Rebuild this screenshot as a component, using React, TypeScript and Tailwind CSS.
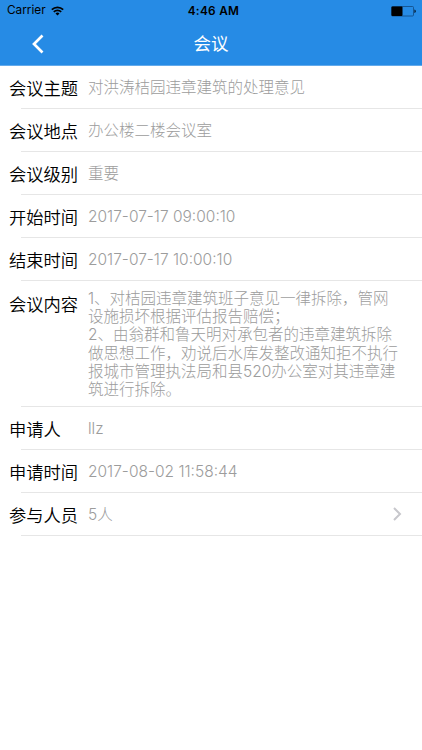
interface RowProps {
  label: string;
  value: string;
  arrow?: boolean;
}

const rows: RowProps[] = [
  { label: "会议主题", value: "对洪涛桔园违章建筑的处理意见" },
  { label: "会议地点", value: "办公楼二楼会议室" },
  { label: "会议级别", value: "重要" },
  { label: "开始时间", value: "2017-07-17 09:00:10" },
  { label: "结束时间", value: "2017-07-17 10:00:10" },
];

const moreRows: RowProps[] = [
  { label: "申请人", value: "llz" },
  { label: "申请时间", value: "2017-08-02 11:58:44" },
  { label: "参与人员", value: "5人", arrow: true },
];

const content = [
  "1、对桔园违章建筑班子意见一律拆除，管网",
  "设施损坏根据评估报告赔偿；",
  "2、由翁群和鲁天明对承包者的违章建筑拆除",
  "做思想工作，劝说后水库发整改通知拒不执行",
  "报城市管理执法局和县520办公室对其违章建",
  "筑进行拆除。",
];

const Row = ({ label, value, arrow }: RowProps) => (
  <div className="h-[43px] flex flex-col">
    <div className="flex-1 flex items-center pl-[9px] pr-5">
      <span className="w-[79px] shrink-0 pt-[3px] text-[17.3px] leading-6 font-[350] text-black">{label}</span>
      <span className="flex-1 pt-px text-[15.5px] leading-6 font-light text-[#9c9c9c] whitespace-nowrap">
        {value}
      </span>
      {arrow && (
        <svg className="w-[9px] h-[14px]" viewBox="0 0 9 14" fill="none" stroke="#c7c7cc" strokeWidth="2">
          <path d="M1 1l6 6-6 6" />
        </svg>
      )}
    </div>
    <div className="ml-[21px] h-px bg-[#e6e6e6]" />
  </div>
);

const App = () => {
  return (
    <div className="w-[422px] h-[750px] bg-white overflow-hidden font-[Inter,'Noto_Sans_CJK_SC',sans-serif]">
      <header className="h-[66px] bg-[#268be5] border-b border-[#63aaeb] flex flex-col">
        {/* Status bar */}
        <div className="h-[22px] grid grid-cols-3 items-center pl-[7px] pr-[6px] text-[11.8px] text-black">
          <div className="flex items-center gap-[5px]">
            <span>Carrier</span>
            <svg className="w-[13px] h-[10px]" viewBox="0 0 13 10" fill="none" stroke="black" strokeWidth="1.7">
              <path d="M.8 3.6a8.2 8.2 0 0 1 11.4 0M2.8 5.9a5.2 5.2 0 0 1 7.4 0" />
              <path d="M6.5 9.5L4.5 7.5a2.9 2.9 0 0 1 4 0z" fill="black" stroke="none" />
            </svg>
          </div>
          <span className="pl-1 pt-px text-center font-semibold tracking-[0.025em]">4:46 AM</span>
          <svg className="justify-self-end w-[25px] h-[11px]" viewBox="0 0 25 11">
            <rect x=".5" y=".5" width="22" height="9.5" rx="1" fill="none" stroke="#124a80" strokeWidth=".8" />
            <rect x=".5" y=".5" width="11" height="9.5" rx="1" fill="black" />
            <path d="M23.5 3.5c1.6.5 1.6 3 0 3.5z" fill="black" />
          </svg>
        </div>
        {/* Title bar */}
        <div className="flex-1 grid grid-cols-3 items-center text-white">
          <svg className="ml-8 w-3 h-5" viewBox="0 0 12 20" fill="none" stroke="white" strokeWidth="2.7">
            <path d="M10.5 1.5L2 10l8.5 8.5" />
          </svg>
          <h1 className="pt-px text-center text-[17.5px]">会议</h1>
        </div>
      </header>

      <main>
        {rows.map((row) => (
          <Row key={row.label} {...row} />
        ))}
        <div className="h-[126px] flex flex-col">
          <div className="flex-1 flex pl-[9px]">
            <span className="w-[79px] shrink-0 pt-3 text-[17.3px] leading-6 font-[350] text-black">会议内容</span>
            <div className="pt-[9px] text-[15.5px] leading-[18.2px] font-light text-[#9c9c9c]">
              {content.map((line) => (
                <p key={line} className="whitespace-nowrap">{line}</p>
              ))}
            </div>
          </div>
          <div className="ml-[21px] h-px bg-[#e6e6e6]" />
        </div>
        {moreRows.map((row) => (
          <Row key={row.label} {...row} />
        ))}
      </main>
    </div>
  );
};

export default App;
